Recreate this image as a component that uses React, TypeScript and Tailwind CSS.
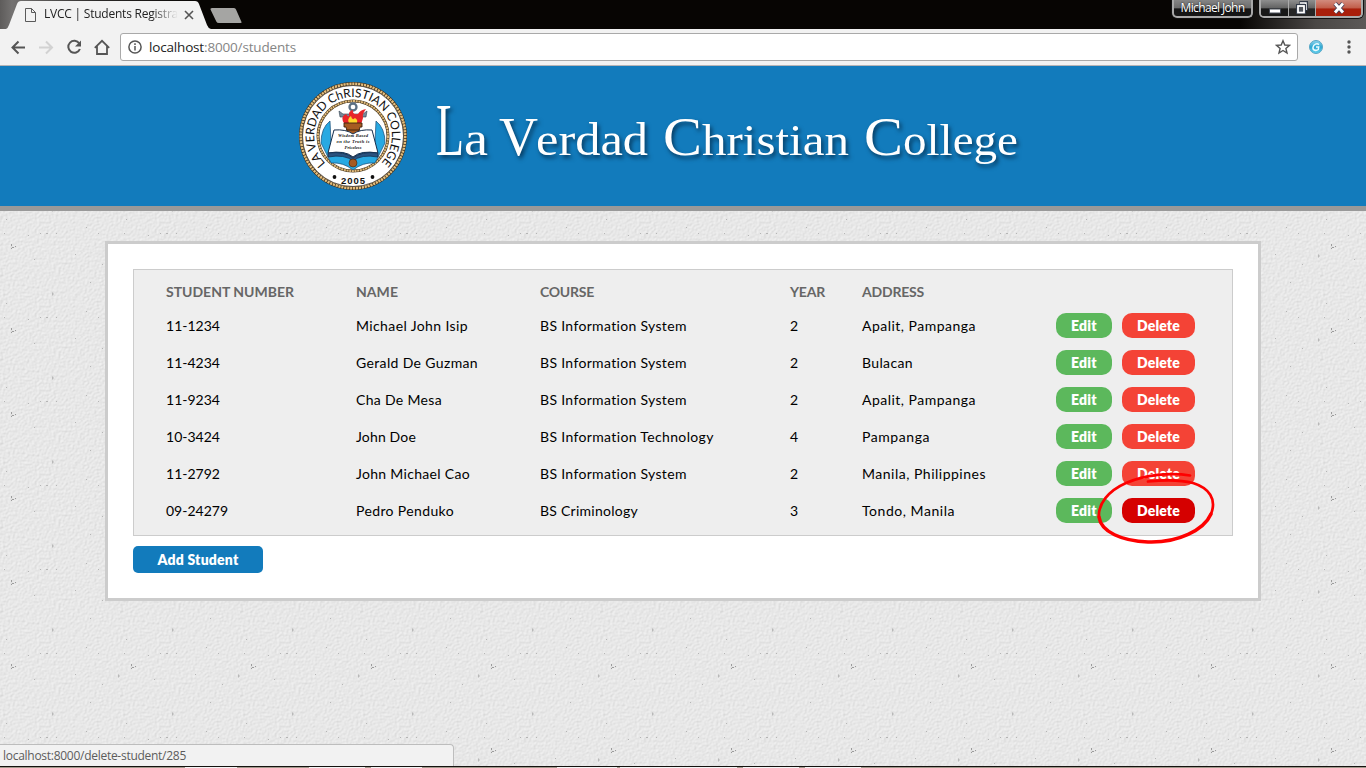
import { useLayoutEffect, useRef, type ReactNode } from "react";

/** Text spread over a given advance width by letter spacing. */
function Fit({ w, className = "", children }: { w: number; className?: string; children: string }) {
  const ref = useRef<HTMLSpanElement>(null);
  useLayoutEffect(() => {
    const el = ref.current;
    if (!el) return;
    el.style.letterSpacing = "0px";
    const natural = el.getBoundingClientRect().width;
    el.style.letterSpacing = `${(w - natural) / children.length}px`;
  }, [w, children]);
  return (
    <span ref={ref} className={`inline-block whitespace-pre ${className}`}>
      {children}
    </span>
  );
}

function TitleBar() {
  return (
    <div className="relative flex h-[29px] w-full items-start justify-between overflow-hidden bg-[#070503]">
      <svg className="absolute inset-0" width="1366" height="29" viewBox="0 0 1366 29">
        <defs>
          <linearGradient id="glassL" x1="0" x2="1">
            <stop offset="0" stopColor="#5e5c5b" />
            <stop offset="0.06" stopColor="#747271" />
            <stop offset="0.5" stopColor="#2a2827" />
            <stop offset="1" stopColor="#070503" />
          </linearGradient>
          <linearGradient id="glassR" x1="0" x2="1">
            <stop offset="0" stopColor="#070503" />
            <stop offset="0.6" stopColor="#4a4745" />
            <stop offset="1" stopColor="#5c5957" />
          </linearGradient>
        </defs>
        <rect width="200" height="29" fill="url(#glassL)" />
        <rect x="1240" width="126" height="29" fill="url(#glassR)" />
        <path d="M6 29 Q8 28 9 25 L17 4 Q18 1 21 1 H195 Q198 1 199 4 L207 25 Q208 28 211 29 Z" fill="#f2f2f2" />
        <path d="M212 8 H234 Q235.500 8 236 9.500 L241.500 22 Q242 23 240.500 23 H219 Q217 23 216.300 21.500 L210.500 9.500 Q210 8 212 8 Z" fill="#a5a5a3" />
      </svg>
      <div className="relative flex h-[29px] w-[208px] items-center pl-[25px]">
        <svg width="11" height="14" viewBox="0 0 11 14" fill="none" stroke="#5a5a5a">
          <path d="M.5.5H6.500L10.500 4.500V13.500H.5ZM6.500.5V4.500H10.500" />
        </svg>
        <div className="ml-2 flex w-[136px] overflow-hidden whitespace-nowrap pb-[2px] [mask-image:linear-gradient(to_right,black_108px,transparent_134px)]">
          <Fit w={134} className="font-['Open_Sans',sans-serif] text-[12px] leading-4 text-[#222]">LVCC | Students Registra</Fit>
        </div>
        <svg className="ml-1" width="10" height="10" viewBox="0 0 10 10" stroke="#555" strokeWidth="1.600">
          <path d="M1 1 9 9M9 1 1 9" />
        </svg>
      </div>
      <div className="relative flex">
        <div className="flex h-[18px] w-[81px] items-start justify-center rounded-b-[5px] border-2 border-t-0 border-[#a8a8a8] bg-linear-to-b from-[#858585] from-0% via-[#6c6c6c] via-50% to-[#161616] to-55% shadow-[0_0_0_1px_#111]">
          <Fit w={64} className="font-['Open_Sans',sans-serif] text-[12px] leading-[16px] text-white [text-shadow:0_0_2px_#000]">Michael John</Fit>
        </div>
        <div className="mr-[3px] ml-[6px] flex h-[18px] overflow-hidden rounded-b-[5px] border-2 border-t-0 border-[#aaa] shadow-[0_0_0_1px_#111]">
          <div className="flex w-[28px] items-center justify-center border-r border-[#aaa] bg-linear-to-b from-[#8e8e8e] via-[#636363] via-50% to-[#181818] to-55%">
            <svg width="12" height="16" viewBox="0 0 12 16"><rect x=".5" y="9" width="11" height="4" fill="#fff" stroke="#454a55" /></svg>
          </div>
          <div className="flex w-[27px] items-center justify-center border-r border-[#aaa] bg-linear-to-b from-[#8e8e8e] via-[#636363] via-50% to-[#252525] to-55%">
            <svg width="12" height="14" viewBox="0 0 12 14" fill="none">
              <path d="M3.500 1.500H10.500V9.500" stroke="#333b49" strokeWidth="3" />
              <path d="M4 2H10V9" stroke="#fff" strokeWidth="1.500" />
              <rect x="1.500" y="4.500" width="7" height="7" fill="#50545b" stroke="#333b49" strokeWidth="3" />
              <rect x="2" y="5" width="6" height="6.500" stroke="#fff" strokeWidth="1.800" />
            </svg>
          </div>
          <div className="flex w-[45px] items-center justify-center bg-linear-to-b from-[#d18b7e] via-[#c15d4a] via-50% to-[#a91f0b] to-55%">
            <svg width="14" height="12" viewBox="0 0 14 12">
              <path d="M3 1.500 11 10.500M11 1.500 3 10.500" stroke="#47425a" strokeWidth="4.500" />
              <path d="M3 1.500 11 10.500M11 1.500 3 10.500" stroke="#fff" strokeWidth="2.700" />
            </svg>
          </div>
        </div>
      </div>
    </div>
  );
}

function Toolbar() {
  return (
    <div className="flex h-[37px] w-full items-center border-b border-[#b6b4b6] bg-[#f2f2f2] pb-px pl-[10px]">
      <svg width="102" height="20" viewBox="0 0 102 20" fill="none" stroke="#555" strokeWidth="2">
        <path d="M15 10.500H2.500M8.500 4.500 2.500 10.500 8.500 16.500" />
        <path d="M29 10.500H42M36 4.500 42 10.500 36 16.500" stroke="#d2d2d2" />
        <path d="M69.300 6.500A6 6 0 1 0 69.900 12" />
        <path d="M71 3.500V9.500H65Z" fill="#555" stroke="none" />
        <path d="M84.800 10.800 92 3.800 99.200 10.800M87 9V17H97V9" strokeWidth="1.800" />
      </svg>
      <div className="ml-2 flex h-[28px] w-[1178px] items-center rounded-[3px] border border-[#a9a9a9] bg-white pr-[6px] pl-[7px]">
        <svg width="14" height="14" viewBox="0 0 14 14" fill="none" stroke="#555" strokeWidth="1.500">
          <circle cx="7" cy="7" r="6.100" />
          <path d="M7 6V10.500M7 3.300V5" />
        </svg>
        <span className="ml-[7px] flex font-['Open_Sans',sans-serif] text-[13.500px] leading-5">
          <Fit w={55} className="text-[#222]">localhost</Fit>
          <Fit w={92} className="text-[#858585]">:8000/students</Fit>
        </span>
        <svg className="ml-auto" width="16" height="16" viewBox="0 0 16 16" fill="none" stroke="#555" strokeWidth="1.400">
          <path d="M8 1.700 9.800 6 14.500 6.400 10.900 9.400 12 14 8 11.500 4 14 5.100 9.400 1.500 6.400 6.200 6Z" />
        </svg>
      </div>
      <svg className="ml-[11px]" width="14" height="14" viewBox="0 0 14 14">
        <defs>
          <linearGradient id="orb" x1="0" y1="0" x2="0" y2="1">
            <stop offset="0" stopColor="#8fd6ee" />
            <stop offset="0.5" stopColor="#2da9d4" />
            <stop offset="1" stopColor="#63d1ee" />
          </linearGradient>
        </defs>
        <circle cx="7" cy="7" r="6.500" fill="url(#orb)" stroke="#58a6c5" />
        <path d="M10 4.600C8 3 4.500 4 4 7.300S7.500 11 9.300 9.500L9.700 7H7" stroke="#e9fbff" strokeWidth="1.500" fill="none" />
      </svg>
      <svg className="ml-6" width="4" height="14" viewBox="0 0 4 14" fill="#555">
        <circle cx="2" cy="2" r="1.700" /><circle cx="2" cy="7" r="1.700" /><circle cx="2" cy="12" r="1.700" />
      </svg>
    </div>
  );
}

function Seal() {
  return (
    <svg width="110" height="110" viewBox="-55 -55 110 110" className="shrink-0">
      <defs>
        <path id="motto" d="M-27.500 27.500A38.900 38.900 0 1 1 27.500 27.500" />
      </defs>
      <circle r="54" fill="#3c2e1c" />
      <circle r="52.200" fill="none" stroke="#e3bd7c" strokeWidth="2.600" strokeDasharray="2.200 .75" />
      <circle r="50.500" fill="#fff" stroke="#3c2e1c" strokeWidth=".7" />
      <circle r="35" fill="#fff" stroke="#4b3921" strokeWidth="3" />
      <circle r="35" fill="none" stroke="#e3bd7c" strokeWidth="1.900" strokeDasharray="2 .7" />
      <text fontFamily="Lato, sans-serif" fontSize="12" fill="#111">
        <textPath href="#motto" textLength="182" lengthAdjust="spacing">LA VERDAD ChRISTIAN COLLEGE</textPath>
      </text>
      <text x="0" y="47.500" textAnchor="middle" fontFamily="'Liberation Sans', sans-serif" fontWeight="bold" fontSize="9.500" textLength="24" fill="#111">2005</text>
      <circle cx="-18.500" cy="41" r="1.900" fill="#111" />
      <circle cx="19.500" cy="41" r="1.900" fill="#111" />
      <path d="M-32 7Q-32-8-23-15L-22 6 0 22 22 6 23-15Q32-8 32 7L22 27Q10 26 0 34-10 26-22 27Z" fill="#28a9e2" stroke="#174a76" strokeWidth=".7" />
      <circle cy="-29" r="3.500" fill="none" stroke="#5b7084" strokeWidth="2.300" />
      <path d="M-14-25-13-19H13L14-25 10-22H-10Z" fill="#77899a" stroke="#33414f" strokeWidth=".6" />
      <path d="M-3-22H3V28H-3Z" fill="#6e7f8e" />
      <path d="M-8-11Q-14-19-7-22-5-19-4-20-5-25 0-26-1-21 5-22 7-26 13-27 9-22 10-18 9-13 7-11Z" fill="#e8252a" />
      <path d="M-3-11Q-7-17-2-20-1-15 2-18 6-16 3-11Z" fill="#ffd42b" />
      <path d="M-9-13H9V-9H7L5-1 3 6H-3L-5-1-7-9H-9Z" fill="#a65a22" stroke="#40220d" strokeWidth=".9" />
      <path d="M-7-6H7M-5-1H5" stroke="#40220d" />
      <path d="M-19-6Q-7-7 0-2 7-7 19-6L25 17Q8 14 0 21-8 14-25 17Z" fill="#fff" stroke="#152d4c" strokeWidth="1" />
      <path d="M-25 17Q-8 15 0 22 8 15 25 17V21Q8 18 0 25-8 18-25 21Z" fill="#29527f" stroke="#152d4c" strokeWidth=".8" />
      <g fontFamily="'Liberation Serif', serif" fontWeight="bold" fontStyle="italic" fontSize="4.600" textAnchor="middle" fill="#111">
        <text y="1" textLength="30">Wisdom Based</text>
        <text y="6.800" textLength="33">on the Truth is</text>
        <text y="12.600">Priceless</text>
      </g>
      <circle cy="27" r="4" fill="#a65a22" stroke="#40220d" strokeWidth=".6" />
    </svg>
  );
}

function Glyphs({ x, size, w, children }: { x: number; size: number; w: number; children: string }) {
  return (
    <tspan x={x} fontSize={size} textLength={w} lengthAdjust="spacingAndGlyphs">
      {children}
    </tspan>
  );
}

function Header() {
  return (
    <header className="flex h-[145px] w-full items-center border-b-[5px] border-[#999] bg-[#127bbc] pl-[298px]">
      <Seal />
      <svg className="ml-[22px] [filter:drop-shadow(2px_3px_2px_rgba(0,20,40,.65))]" width="600" height="110" viewBox="430 81 600 110" fill="#fff" fontFamily="'Liberation Serif', serif">
        <text y="154.500"><Glyphs x={436} size={73} w={28}>L</Glyphs><Glyphs x={464} size={49} w={24}>a</Glyphs></text>
        <text y="154.500"><Glyphs x={499} size={55} w={39}>V</Glyphs><Glyphs x={536} size={46} w={112}>erdad</Glyphs></text>
        <text y="154.500"><Glyphs x={663} size={54} w={39}>C</Glyphs><Glyphs x={702} size={45} w={147}>hristian</Glyphs></text>
        <text y="154.500"><Glyphs x={864} size={54} w={39}>C</Glyphs><Glyphs x={903} size={45} w={115}>ollege</Glyphs></text>
      </svg>
    </header>
  );
}

/** Plaster wall, a 120 by 84 tile. */
function Plaster() {
  return (
    <svg className="absolute inset-0" width="1366" height="555">
      <defs>
        <filter id="grain" x="0" y="0" width="1" height="1" colorInterpolationFilters="sRGB">
          <feTurbulence type="fractalNoise" baseFrequency="0.42" numOctaves="2" seed="8" stitchTiles="stitch" />
          <feDiffuseLighting surfaceScale="0.5" diffuseConstant="1.150" lightingColor="#e8e8e8">
            <feDistantLight azimuth="225" elevation="60" />
          </feDiffuseLighting>
        </filter>
        <pattern id="tile" width="120" height="84" y="-43" patternUnits="userSpaceOnUse">
          <rect width="120" height="84" fill="#e8e8e8" />
          <rect width="120" height="84" filter="url(#grain)" opacity=".4" />
          <path d="M52 40 54 42 52 44ZM118 2 120 4 118 6Z" fill="#b8b8b8" />
          <path d="M11 76h1v2h-1zM12 79h2v1h-2zM15 78h1v1h-1zM11 80h1v1h-1z" fill="#9c9c9c" />
          <path d="M4 65h1v1h-1zM28 67h1v1h-1zM40 65h1v1h-1zM46 65h2v1h-2zM56 65h1v1h-1zM98 65h1v1h-1zM6 51h1v1h-1zM86 59h1v1h-1zM75 2h1v1h-1zM102 12h1v1h-1zM34 7h1v1h-1zM90 30h1v1h-1z" fill="#b5b5b5" />
        </pattern>
      </defs>
      <rect width="1366" height="555" fill="url(#tile)" />
    </svg>
  );
}

const heads: [string, number][] = [["STUDENT NUMBER", 128], ["NAME", 42], ["COURSE", 54], ["YEAR", 35], ["ADDRESS", 62]];

const system: [string, number] = ["BS Information System", 147];
const rows: [string, number][][] = [
  [["11-1234", 54], ["Michael John Isip", 112], system, ["2", 8], ["Apalit, Pampanga", 114]],
  [["11-4234", 54], ["Gerald De Guzman", 122], system, ["2", 8], ["Bulacan", 51]],
  [["11-9234", 54], ["Cha De Mesa", 86], system, ["2", 8], ["Apalit, Pampanga", 114]],
  [["10-3424", 54], ["John Doe", 60], ["BS Information Technology", 174], ["4", 8], ["Pampanga", 68]],
  [["11-2792", 54], ["John Michael Cao", 114], system, ["2", 8], ["Manila, Philippines", 124]],
  [["09-24279", 62], ["Pedro Penduko", 98], ["BS Criminology", 98], ["3", 8], ["Tondo, Manila", 93]],
];

const grid = "grid grid-cols-[190px_184px_250px_72px_194px_66px_73px] items-center pl-8";

function Pill({ className, children }: { className: string; children: ReactNode }) {
  return (
    <button className={`flex h-[25px] items-center justify-center rounded-[10px] font-extrabold text-white ${className}`}>
      {children}
    </button>
  );
}

function Students() {
  return (
    <section className="relative mx-auto h-[360px] w-[1156px] border-[3px] border-[#ccc] bg-white p-[25px] font-['Lato',sans-serif] text-[14px] leading-5">
      <div className="relative h-[267px] border border-[#ccc] bg-[#eee]">
        <div className={`${grid} h-[37px] pt-1.5 font-bold text-[#666]`}>
          {heads.map(([t, w]) => <Fit key={t} w={w} className="justify-self-start">{t}</Fit>)}
        </div>
        {rows.map((row, i) => (
          <div key={i} className={`${grid} h-[37px] text-black`}>
            {row.map(([t, w], j) => <Fit key={j} w={w} className="mt-px justify-self-start">{t}</Fit>)}
            <Pill className="w-[56px] bg-[#5cb85c]"><Fit w={26}>Edit</Fit></Pill>
            <Pill className={i === 5 ? "w-[73px] bg-[#d50000]" : "w-[73px] bg-[#f44336]"}><Fit w={43}>Delete</Fit></Pill>
          </div>
        ))}
        <svg className="absolute top-[200px] left-[956px]" width="130" height="80" viewBox="1090 470 130 80" fill="none" stroke="#fe0000" strokeLinecap="round">
          <path d="M1190 475.500C1170 472 1145 475 1126 483 1108 491 1098 504 1099 517" strokeWidth="2.700" />
          <path d="M1099 517C1101 532 1122 541 1148 542 1178 543 1204 530 1211 514" strokeWidth="3.500" />
          <path d="M1211 514C1217 499 1209 488 1193 483 1178 479 1162 480 1148 481.500" strokeWidth="2.700" />
        </svg>
      </div>
      <button className="mt-[10px] flex h-[27px] w-[130px] items-center justify-center rounded-[5px] bg-[#127bbc] font-extrabold text-white">
        <Fit w={81}>Add Student</Fit>
      </button>
    </section>
  );
}

export default function App() {
  return (
    <div className="flex h-[768px] w-[1366px] flex-col overflow-hidden">
      <TitleBar />
      <Toolbar />
      <Header />
      <main className="relative flex h-[555px] flex-col overflow-hidden bg-[#e6e6e6] pt-[30px]">
        <Plaster />
        <Students />
        <div className="relative mt-auto h-[22px] w-[454px] rounded-tr-[4px] border-t border-r border-[#bdbdbd] bg-[#f2f2f2] pl-[3px] font-['Open_Sans',sans-serif] text-[12px] leading-[22px] text-[#5c5c5c]">
          <Fit w={183}>localhost:8000/delete-student/285</Fit>
        </div>
      </main>
      <svg width="1366" height="2" className="shrink-0">
        <rect width="1366" height="1" fill="#15120f" />
        <rect y="1" width="1366" height="1" fill="#a39a8d" />
        <path d="M185 1h52v1h-52zM309 1h56v1h-56zM371 1h51v1h-51zM557 1h60v1h-60zM620 1h117v1h-117zM743 1h56v1h-56zM805 1h56v1h-56z" fill="#f4f4f4" />
      </svg>
    </div>
  );
}
